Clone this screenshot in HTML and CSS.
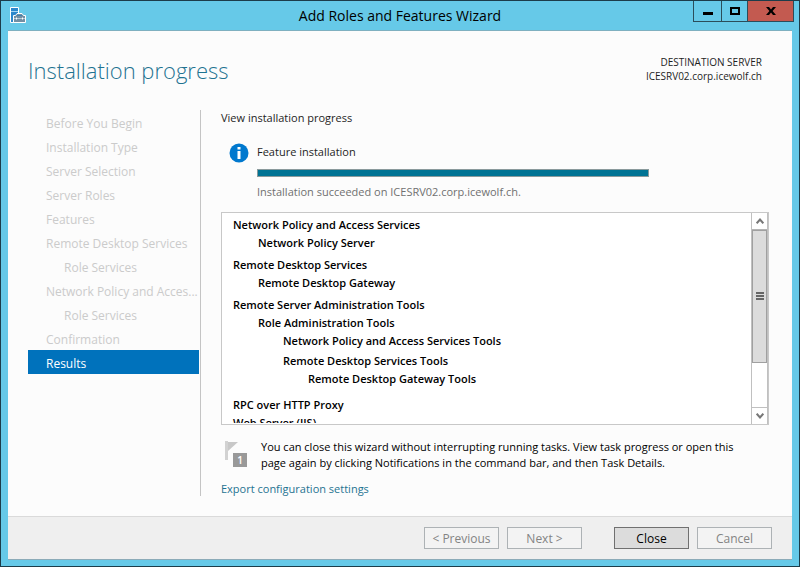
FILE: index.html
```html
<!DOCTYPE html>
<html lang="en">
<head>
<meta charset="utf-8">
<title>Add Roles and Features Wizard</title>
<link rel="stylesheet" href="styles.css">
</head>
<body>
<div class="window">
  <header class="titlebar">
    <svg class="app-icon" width="16" height="16" viewBox="0 0 16 16" aria-hidden="true">
      <path d="M.5.5h8v15h-8z" fill="#2b87cb" stroke="#fff"/>
      <path d="M1 4.500h7" stroke="#a5d5f2"/>
      <path d="M3.500 15.500v-7h2l1.500-2h5l1.500 2h2v7z" fill="#728fa4" stroke="#fff"/>
      <path d="M7 8.500h5" stroke="#3f7fae"/>
      <path d="M4 11.500h11" stroke="#b9cbd6"/>
      <path d="M6.500 10.500v2M12.500 10.500v2" stroke="#fff"/>
    </svg>
    <div class="caption">Add Roles and Features Wizard</div>
    <div class="window-buttons">
      <button class="win-btn" type="button" aria-label="Minimize"><svg width="10" height="10" viewBox="0 0 10 10"><path d="M0 6h10v3H0z"/></svg></button>
      <button class="win-btn" type="button" aria-label="Maximize"><svg width="10" height="10" viewBox="0 0 10 10"><path d="M0 1h10v8H0zM2 3v4h6V3z" fill-rule="evenodd"/></svg></button>
      <button class="win-btn win-close" type="button" aria-label="Close window"><svg width="10" height="10" viewBox="0 0 10 10"><path d="M0 1h3l2 2.500L7 1h3L6.600 5 10 9H7L5 6.500 3 9H0l3.400-4z"/></svg></button>
    </div>
  </header>

  <div class="client">
    <div class="heading">
      <h1>Installation progress</h1>
      <div class="server">
        <p>DESTINATION SERVER</p>
        <p>ICESRV02.corp.icewolf.ch</p>
      </div>
    </div>

    <div class="columns">
      <nav class="steps">
        <ol>
          <li>Before You Begin</li>
          <li>Installation Type</li>
          <li>Server Selection</li>
          <li>Server Roles</li>
          <li>Features</li>
          <li>Remote Desktop Services</li>
          <li class="sub">Role Services</li>
          <li>Network Policy and Acces...</li>
          <li class="sub">Role Services</li>
          <li>Confirmation</li>
          <li class="current" aria-current="step">Results</li>
        </ol>
      </nav>

      <main class="content">
        <p class="intro">View installation progress</p>
        <section class="status">
          <svg class="info" width="20" height="20" viewBox="0 0 20 20" aria-hidden="true">
            <circle cx="10" cy="10" r="9.500" fill="#0078ce"/>
            <path d="M8.500 4h3v2.500h-3zM8.500 8h3v8h-3z" fill="#fff"/>
          </svg>
          <div class="status-body">
            <p id="job">Feature installation</p>
            <div class="bar" role="progressbar" aria-labelledby="job" aria-valuenow="100"></div>
            <p class="outcome">Installation succeeded on ICESRV02.corp.icewolf.ch.</p>
          </div>
        </section>

        <div class="results">
          <div class="results-view">
            <ul>
              <li>Network Policy and Access Services
                <ul><li>Network Policy Server</li></ul>
              </li>
              <li>Remote Desktop Services
                <ul><li>Remote Desktop Gateway</li></ul>
              </li>
              <li>Remote Server Administration Tools
                <ul>
                  <li>Role Administration Tools
                    <ul>
                      <li>Network Policy and Access Services Tools</li>
                      <li>Remote Desktop Services Tools
                        <ul><li>Remote Desktop Gateway Tools</li></ul>
                      </li>
                    </ul>
                  </li>
                </ul>
              </li>
              <li class="flat">RPC over HTTP Proxy</li>
              <li>Web Server (IIS)</li>
            </ul>
          </div>
          <div class="scrollbar">
            <button type="button" class="arrow" aria-label="Scroll up"><svg width="8" height="6" viewBox="0 0 8 6"><path d="M.7 5.300 4 1.500l3.300 3.800"/></svg></button>
            <div class="track"><div class="thumb"><i></i><i></i><i></i></div></div>
            <button type="button" class="arrow arrow-down" aria-label="Scroll down"><svg width="8" height="6" viewBox="0 0 8 6"><path d="M.7.700 4 4.500 7.300.700"/></svg></button>
          </div>
        </div>

        <div class="note">
          <div class="flag">
            <svg width="14" height="19" viewBox="0 0 14 19" aria-hidden="true"><path d="M0 0h3v19H0z" fill="#d2d2d2"/><path d="M3 1h10L3 10z" fill="#c8c8c8"/></svg>
            <span class="count">1</span>
          </div>
          <p>You can close this wizard without interrupting running tasks. View task progress or open this<br>page again by clicking Notifications in the command bar, and then Task Details.</p>
        </div>
        <a class="export" href="#">Export configuration settings</a>
      </main>
    </div>

    <footer class="actions">
      <button type="button" disabled>&lt; Previous</button>
      <button type="button" disabled>Next &gt;</button>
      <button type="button" class="primary">Close</button>
      <button type="button" disabled>Cancel</button>
    </footer>
  </div>
</div>
</body>
</html>
```
FILE: styles.css
```css
* { box-sizing: border-box; }

body {
  margin: 0;
  color: #1e1e1e;
  font: 12px/18px "Open Sans", "Noto Sans", sans-serif;
}

h1, p, ul, ol { margin: 0; padding: 0; }
ul, ol { list-style: none; }
button { font: inherit; margin: 0; padding: 0; border-radius: 0; }

.window {
  display: flex;
  flex-direction: column;
  height: 100vh;
  padding: 0 7px 6px;
  border: 1px solid #1c3c4a;
  background: #66c9e8;
}

/* Title bar */
.titlebar {
  display: grid;
  grid-template-columns: 1fr auto 1fr;
  flex: none;
  height: 30px;
  border-bottom: 1px solid #7fb0c0;
}
.app-icon { margin: 6px 0 0 2px; }
.caption { font-size: 14px; line-height: 30px; color: #000; }
.window-buttons { display: flex; justify-self: end; height: 21px; margin-right: -2px; }
.win-btn {
  display: grid;
  place-items: center;
  width: 29px;
  border: 1px solid #2b4d5a;
  border-top: 0;
  background: #66c9e8;
}
.win-btn + .win-btn { width: 27px; margin-left: -1px; }
.win-btn + .win-close { width: 47px; background: #c35a50; }

/* Client area */
.client {
  display: flex;
  flex: 1;
  flex-direction: column;
  min-height: 0;
  background: #fcfcfc;
  border-bottom: 1px solid #8cabb8;
}
.heading {
  display: flex;
  justify-content: space-between;
  flex: none;
  height: 79px;
  padding: 24px 30px 0 20px;
}
h1 { font-size: 22px; font-weight: 300; line-height: 30px; color: #1f7391; }
.server { font-size: 10px; line-height: 14px; text-align: right; }

.columns { display: flex; flex: 1; min-height: 0; padding: 0 23px 20px 20px; }

.steps {
  flex: none;
  width: 173px;
  padding-right: 1px;
  border-right: 1px solid #c4c4c4;
  color: #cbcbcb;
}
.steps li { height: 24px; padding-left: 18px; line-height: 28px; white-space: nowrap; }
.steps .sub { padding-left: 36px; }
.steps .current { background: #0072bc; color: #fff; }

.content {
  display: flex;
  flex: 1;
  flex-direction: column;
  min-width: 0;
  padding-left: 20px;
  font-size: 11px;
}
.intro { line-height: 16px; }
.status { display: flex; gap: 8px; padding: 17px 0 11px 8px; }
.info { flex: none; }
.status-body { flex: 1; max-width: 392px; }
.bar { height: 8px; margin: 8px 0 6px; border: 1px solid #8a9a9c; background: #007394; }
.outcome { color: #707070; }

/* Results list */
.results { display: flex; flex: 1; min-height: 0; border: 1px solid #c8c8c8; background: #fff; }
.results-view {
  flex: 1;
  min-height: 0;
  overflow: hidden;
  margin-bottom: 1px;
  padding: 3px 11px 0;
  color: #000;
  font-weight: 600;
}
.results-view li { padding-bottom: 2px; }
.results-view .flat { padding-bottom: 0; }
.results-view ul ul { padding-left: 25px; }

.scrollbar {
  display: flex;
  flex-direction: column;
  width: 17px;
  border: 1px solid #c0c0c0;
  border-width: 0 1px 0 1px;
}
.arrow {
  display: grid;
  place-items: center;
  height: 17px;
  border: 0;
  border-bottom: 1px solid #b4b4b4;
  background: #fff;
}
.arrow-down { border-top: 1px solid #c0c0c0; border-bottom: 0; }
.arrow path { fill: none; stroke: #777; stroke-width: 2; }
.track { flex: 1; }
.thumb {
  display: flex;
  flex-direction: column;
  align-items: center;
  justify-content: center;
  gap: 1px;
  height: 75%;
  border: 1px solid #a0a0a0;
  background: #dcdcdc;
}
.thumb i { width: 8px; height: 2px; background: #666; }

/* Closing note */
.note { display: flex; gap: 14px; padding: 14px 0 0 4px; line-height: 16px; color: #000; }
.flag { position: relative; flex: none; width: 22px; height: 26px; margin-top: 2px; }
.count {
  position: absolute;
  right: 0;
  bottom: 0;
  width: 14px;
  height: 14px;
  background: #999;
  color: #fff;
  font-size: 10px;
  font-weight: 600;
  line-height: 14px;
  text-align: center;
}
.export { margin-top: 11px; line-height: 14px; color: #1f7391; text-decoration: none; align-self: start; }

/* Command buttons */
.actions {
  display: flex;
  justify-content: flex-end;
  gap: 8px;
  flex: none;
  height: 43px;
  padding: 10px 20px 0;
  border-top: 1px solid #dadada;
  background: #efefef;
}
.actions button {
  width: 75px;
  height: 22px;
  padding-top: 2px;
  border: 1px solid #adb2b5;
  background: #f3f3f3;
  color: #838383;
  line-height: 18px;
}
.actions .primary { margin-left: 24px; border-color: #707070; background: #dcdcdc; color: #000; }
```
